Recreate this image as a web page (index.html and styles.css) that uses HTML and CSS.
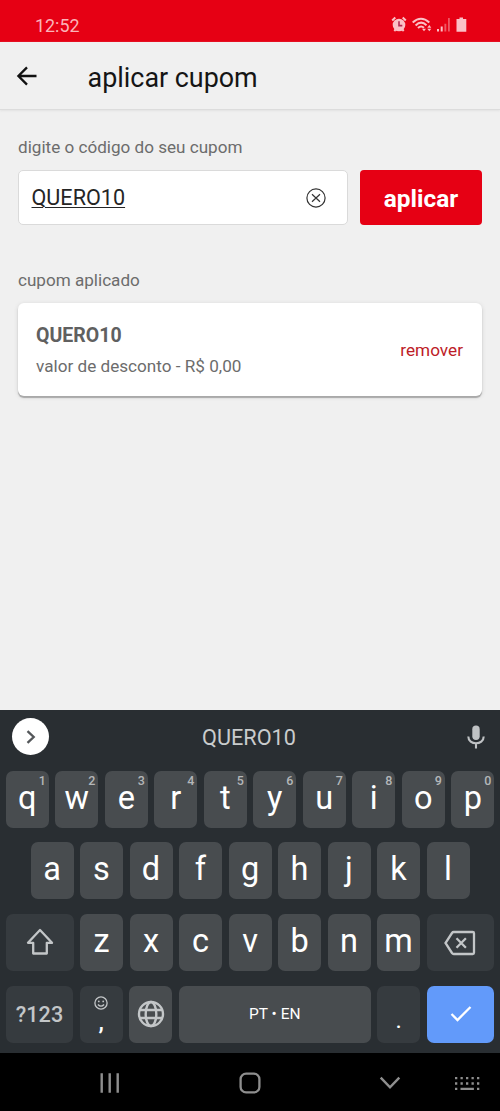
FILE: index.html
```html
<!DOCTYPE html>
<html lang="pt-BR">
<head>
<meta charset="utf-8">
<title>aplicar cupom</title>
<link rel="stylesheet" href="styles.css">
</head>
<body>
<div class="screen">
  <div class="status">
    <span class="clock">12:52</span>
    <svg class="status-icons" width="80" height="18" viewBox="0 0 80 18">
      <g fill="#fbc0c6">
        <circle cx="8" cy="9" r="6.300"/>
        <path d="M3.300 15L5.300 12.700M12.700 15L10.700 12.700M1.200 4.500L4.300 1.500M14.800 4.500L11.700 1.500" stroke="#fbc0c6" stroke-width="2" fill="none"/>
        <path d="M8 5.300V9.600H11.300" fill="none" stroke="#b52a55" stroke-width="1.600"/>
        <path d="M21.700 6.600Q30-1 38.300 6.600M24.600 9.500Q30 4 35.500 9.200M27 12Q30 9 33 11.800" fill="none" stroke="#fbc0c6" stroke-width="2"/>
        <path d="M31 12.800h4l-2 2.500zM36.300 11.700h4l-2-2.800zM36.300 12.800h4l-2 2.500z"/>
        <path d="M46 13h2v2.500h-2zM49.700 10.500h2v5h-2z"/>
        <path d="M53.400 7.700h1.900v7.800h-1.900zM57 2h1.800v13.500H57z" opacity=".45"/>
        <path d="M68.500 1.500H72V3H75.300V15.700H65.500V3H68.500z"/>
      </g>
    </svg>
  </div>
  <header class="appbar">
    <svg class="back" width="22" height="22" viewBox="0 0 22 22"><path d="M20.500 11H3M11 2.400L2.400 11L11 19.600" fill="none" stroke="#111" stroke-width="2.300"/></svg>
    <h1 class="title">aplicar cupom</h1>
  </header>
  <main class="content">
    <label class="label">digite o código do seu cupom</label>
    <div class="form">
      <div class="field">
        <span class="code">QUERO10</span>
        <svg width="20" height="20" viewBox="0 0 20 20" fill="none" stroke="#333" stroke-width="1.200"><circle cx="10" cy="10" r="9.100"/><path d="M6 6.300L14 13.700M14 6.300L6 13.700"/></svg>
      </div>
      <div class="apply">aplicar</div>
    </div>
    <div class="label label-applied">cupom aplicado</div>
    <div class="card">
      <div class="details">
        <div class="coupon">QUERO10</div>
        <div class="discount">valor de desconto - R$ 0,00</div>
      </div>
      <div class="remove">remover</div>
    </div>
  </main>
  <section class="keyboard">
    <div class="suggest">
      <div class="expand"><svg width="12" height="16" viewBox="0 0 12 16"><path d="M2.500 2.200L8.700 8L2.500 13.800" fill="none" stroke="#54575a" stroke-width="2.300"/></svg></div>
      <span class="word">QUERO10</span>
      <svg class="mic" width="18" height="24" viewBox="0 0 18 24"><rect x="5.300" y="0.500" width="7.400" height="14.500" rx="3.700" fill="#bfc2c4"/><path d="M1.300 11.500C1.300 20.500 16.700 20.500 16.700 11.500M9 18V23.500" fill="none" stroke="#bfc2c4" stroke-width="2.100"/></svg>
    </div>
    <div class="row">
      <div class="key">q<sup class="hint">1</sup></div><div class="key">w<sup class="hint">2</sup></div><div class="key">e<sup class="hint">3</sup></div><div class="key">r<sup class="hint">4</sup></div><div class="key">t<sup class="hint">5</sup></div><div class="key">y<sup class="hint">6</sup></div><div class="key">u<sup class="hint">7</sup></div><div class="key">i<sup class="hint">8</sup></div><div class="key">o<sup class="hint">9</sup></div><div class="key">p<sup class="hint">0</sup></div>
    </div>
    <div class="row">
      <div class="key">a</div><div class="key">s</div><div class="key">d</div><div class="key">f</div><div class="key">g</div><div class="key">h</div><div class="key">j</div><div class="key">k</div><div class="key">l</div>
    </div>
    <div class="row">
      <div class="key wide dark"><svg width="28" height="28" viewBox="0 0 28 28"><path d="M14 2L26 14.800H20.800V25.500H7.200V14.800H2z" fill="none" stroke="#c3c6c8" stroke-width="2.300" stroke-linejoin="round"/></svg></div>
      <div class="key">z</div><div class="key">x</div><div class="key">c</div><div class="key">v</div><div class="key">b</div><div class="key">n</div><div class="key">m</div>
      <div class="key wide dark"><svg class="erase" width="32" height="26" viewBox="0 0 32 26"><path d="M9.700 2H28.700Q30 2 30 3.300V22.700Q30 24 28.700 24H9.700Q8.700 24 8 23L1.500 13L8 3Q8.700 2 9.700 2zM12.500 8.300L21.900 17.700M21.900 8.300L12.500 17.700" fill="none" stroke="#c3c6c8" stroke-width="2.300"/></svg></div>
    </div>
    <div class="row">
      <div class="key wide dark symbols">?123</div>
      <div class="key dark comma"><svg width="14" height="14" viewBox="0 0 14 14"><circle cx="7" cy="7" r="6.100" fill="none" stroke="#c3c6c8" stroke-width="1.300"/><circle cx="4.800" cy="5.400" r=".9" fill="#c3c6c8"/><circle cx="9.200" cy="5.400" r=".9" fill="#c3c6c8"/><path d="M3.900 8.500Q7 11.800 10.100 8.500" fill="none" stroke="#c3c6c8" stroke-width="1.300"/></svg><span class="mark">,</span></div>
      <div class="key globe"><svg width="28" height="28" viewBox="0 0 28 28" fill="none" stroke="#c3c6c8" stroke-width="2.400"><circle cx="14" cy="14" r="12"/><ellipse cx="14" cy="14" rx="5.300" ry="12"/><path d="M3 10H25M3 18H25"/></svg></div>
      <div class="key space">PT • EN</div>
      <div class="key dark dot">.</div>
      <div class="key wide enter"><svg width="22" height="18" viewBox="0 0 22 18"><path d="M1.500 9L7.500 15L20.500 2" fill="none" stroke="#fff" stroke-width="2.300"/></svg></div>
    </div>
  </section>
  <nav class="nav">
    <svg width="20" height="22" viewBox="0 0 20 22"><path d="M1.700 1.200V20.800M9.700 1.200V20.800M17.700 1.200V20.800" stroke="#8e8e8e" stroke-width="2.400"/></svg>
    <svg class="home" width="22" height="22" viewBox="0 0 22 22"><rect x="1.600" y="1.600" width="18.800" height="18.800" rx="5.500" fill="none" stroke="#8e8e8e" stroke-width="2.300"/></svg>
    <svg class="down" width="22" height="14" viewBox="0 0 22 14"><path d="M1.700 1.700L11 11.300L20.300 1.700" fill="none" stroke="#8e8e8e" stroke-width="2.400"/></svg>
    <svg class="kbd" width="26" height="16" viewBox="0 0 26 16"><path d="M1 2.200H26M1 7.500H26" stroke="#8e8e8e" stroke-width="2.300" stroke-dasharray="2.300 3.200"/><path d="M1 12.800H3.300M6.500 12.800H19.900M23 12.800H25.300" stroke="#8e8e8e" stroke-width="2.300"/></svg>
  </nav>
</div>
</body>
</html>
```
FILE: styles.css
```css
* { box-sizing: border-box; }
body { margin: 0; font-family: Roboto, sans-serif; }
svg { display: block; flex: none; }
.screen { width: 500px; height: 1111px; display: flex; flex-direction: column; background: #f0f0f0; overflow: hidden; }

.status { height: 42px; flex: none; background: #e60014; display: flex; justify-content: space-between; padding: 15px 29px 0 35px; }
.clock { color: #fbb3b8; font-size: 17.900px; line-height: 21px; }
.status-icons { margin-top: 1px; }

.appbar { height: 68px; flex: none; display: flex; align-items: center; padding: 2px 0 0 16px; border-bottom: 1px solid #dcdcdc; box-shadow: 0 1px 2px #e2e2e2; }
.back { margin-top: -1px; }
.title { margin: 2px 0 0 49.500px; font-size: 26.900px; line-height: 32px; font-weight: 400; color: #151515; }

.content { flex: 1; padding: 27px 18px 0; }
.label { display: block; font-size: 17.100px; line-height: 21px; color: #6c6c6c; }
.form { display: flex; gap: 12px; margin-top: 12px; }
.field { width: 330px; height: 55px; background: #fff; border: 1px solid #dadada; border-radius: 5px; display: flex; align-items: center; justify-content: space-between; padding: 0 21px 0 12.500px; }
.code { font-size: 21.600px; line-height: 26px; margin-top: 1px; color: #252525; text-decoration: underline; text-decoration-thickness: 1px; text-underline-offset: 2px; }
.apply { flex: 1; height: 55px; border-radius: 4px; background: #e60014; color: #fff; font-size: 24.400px; font-weight: 700; line-height: 58px; text-align: center; }
.label-applied { margin-top: 45px; }
.card { height: 93px; margin-top: 12px; padding: 0 19px 0 18px; display: flex; align-items: center; justify-content: space-between; background: #fff; border-radius: 6px; box-shadow: 0 2px 1px #a9a9a9, 0 1px 4px #d0d0d0; }
.details { padding-top: 2px; }
.coupon { font-size: 19.500px; line-height: 31px; font-weight: 700; color: #606060; }
.discount { font-size: 17.150px; line-height: 31px; color: #6c6c6c; }
.remove { font-size: 17.200px; color: #bd1c27; }

.keyboard { height: 343px; flex: none; background: #292e32; padding: 0 5.500px; display: flex; flex-direction: column; gap: 14.500px; }
.suggest { height: 46px; flex: none; padding: 0 9.500px 0 6.500px; display: flex; align-items: center; justify-content: space-between; }
.expand { width: 37px; height: 37px; margin-top: 7px; border-radius: 50%; background: #fff; display: flex; align-items: center; justify-content: center; }
.word { font-size: 21.700px; color: #c9cccd; margin: 8px 0 0 -18px; }
.mic { margin-top: 7px; }
.row { display: flex; justify-content: center; gap: 6.500px; height: 57.200px; flex: none; }
.key { position: relative; width: 43px; height: 57.200px; flex: none; border-radius: 7px; background: #484c4f; color: #fff; font-size: 32.500px; display: flex; align-items: center; justify-content: center; padding-bottom: 3px; }
.hint { position: absolute; top: 2px; right: 3px; font-size: 12.500px; line-height: 15px; font-weight: 500; color: #b4b7b9; }
.wide { width: 67.500px; padding-bottom: 0; }
.erase { margin-top: 2px; }
.dark { background: #363b3f; }
.symbols { font-size: 21.600px; font-weight: 500; color: #c3c6c8; }
.comma { flex-direction: column; justify-content: flex-start; padding: 10px 0 0; }
.mark { font-size: 24px; line-height: 24px; font-weight: 500; }
.globe { padding: 0; }
.space { width: 192px; font-size: 15.500px; padding: 0; }
.dot { font-size: 24px; padding: 12px 0 0; }
.enter { background: #629afa; }

.nav { height: 58px; flex: none; background: #000; display: flex; align-items: center; padding: 2px 0 0 100px; }
.home { margin-left: 119px; }
.down { margin-left: 118px; }
.kbd { margin-left: 53px; margin-top: 2px; }
```
